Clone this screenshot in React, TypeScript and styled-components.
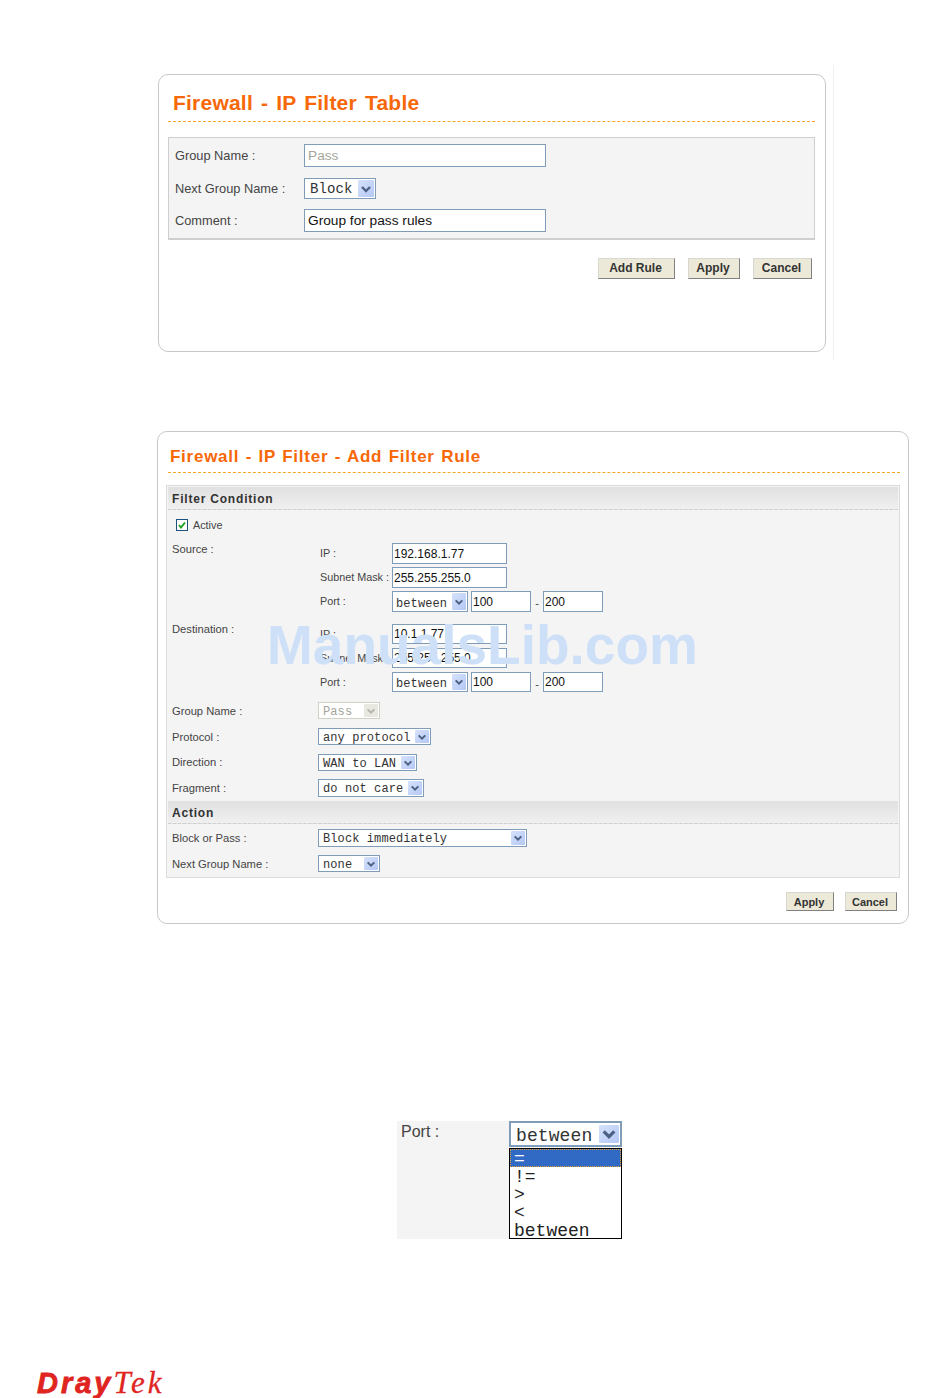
import React from "react";
import styled, { createGlobalStyle } from "styled-components";

const GlobalStyle = createGlobalStyle`
  html, body {
    margin: 0;
    padding: 0;
    background: #fff;
  }
  body {
    font-family: "Liberation Sans", Arial, sans-serif;
  }
`;

const Page = styled.div`
  position: relative;
  width: 950px;
  height: 1398px;
  overflow: hidden;
  display: flex;
  flex-direction: column;
  align-items: flex-start;
`;

const TableFrame = styled.div`
  margin: 65px 0 0 158px;
  padding: 9px 7px 8px 0;
  border-right: 1px solid #f0f0f0;
`;

const Panel = styled.section<{ $w: number; $h: number }>`
  box-sizing: border-box;
  width: ${(p) => p.$w}px;
  height: ${(p) => p.$h}px;
  background: #fff;
  border: 1px solid #c8c8c8;
  border-radius: 10px;
`;

const TableTitle = styled.h1`
  margin: 15px 10px 0 9px;
  padding: 0 0 8px 5px;
  height: 23px;
  line-height: 25px;
  font-size: 21px;
  font-weight: 700;
  letter-spacing: 0.22px;
  word-spacing: 2px;
  color: #f76808;
  border-bottom: 1px dashed #f5a623;
`;

const TableBox = styled.div`
  box-sizing: border-box;
  width: 647px;
  height: 103px;
  margin: 15px 0 0 9px;
  padding: 6px 0 0 6px;
  background: #f4f4f4;
  border: 1px solid #cfcfcf;
  border-bottom-width: 2px;
`;

const TableRow = styled.div<{ $h: number }>`
  height: ${(p) => p.$h}px;
  display: flex;
  align-items: flex-start;
`;

const TableLabel = styled.span<{ $top?: number }>`
  width: 129px;
  padding-top: ${(p) => p.$top ?? 4}px;
  font-size: 12.8px;
  line-height: 15px;
  color: #444;
`;

const TextField = styled.input<{
  $w: number;
  $h?: number;
  $size?: number;
  $pad?: number;
  $left?: number;
}>`
  box-sizing: border-box;
  display: block;
  width: ${(p) => p.$w}px;
  height: ${(p) => p.$h ?? 21}px;
  margin: 0 0 0 ${(p) => p.$left ?? 0}px;
  padding: 0 ${(p) => p.$pad ?? 1}px;
  background: #fff;
  border: 1px solid #7f9db9;
  border-radius: 0;
  outline: none;
  font-family: "Liberation Sans", Arial, sans-serif;
  font-size: ${(p) => p.$size ?? 12}px;
  color: #111;

  &:disabled {
    color: #a5a59a;
    -webkit-text-fill-color: #a5a59a;
    opacity: 1;
  }
`;

const SelectBox = styled.div<{
  $w: number;
  $h?: number;
  $size?: number;
  $off?: boolean;
  $pad?: number;
}>`
  box-sizing: border-box;
  width: ${(p) => p.$w}px;
  height: ${(p) => p.$h ?? 17}px;
  padding: 1px 1px 1px ${(p) => p.$pad ?? 4}px;
  display: flex;
  align-items: center;
  justify-content: space-between;
  background: #fff;
  border: 1px solid ${(p) => (p.$off ? "#d0d0c4" : "#7f9db9")};
  font-family: "Liberation Mono", "Courier New", monospace;
  font-size: ${(p) => p.$size ?? 12}px;
  letter-spacing: 0.1px;
  color: ${(p) => (p.$off ? "#a5a59a" : "#333")};
  white-space: pre;
`;

const SelectText = styled.span<{ $drop: number }>`
  padding-top: ${(p) => p.$drop}px;
`;

const ArrowTile = styled.span<{ $size: number; $off?: boolean }>`
  flex: none;
  width: ${(p) => p.$size}px;
  height: 100%;
  display: flex;
  align-items: center;
  justify-content: center;
  background: ${(p) =>
    p.$off ? "#e8e8e0" : "linear-gradient(135deg, #d6e2fb, #b4c8f5)"};
  border-radius: 1px;

  svg {
    display: block;
    width: ${(p) => p.$size - 4}px;
    height: ${(p) => p.$size - 4}px;
  }
`;

const Select = ({
  value,
  w,
  h,
  size,
  tile = 14,
  off,
  pad,
  drop = 2,
}: {
  value: string;
  w: number;
  h?: number;
  size?: number;
  tile?: number;
  off?: boolean;
  pad?: number;
  drop?: number;
}) => (
  <SelectBox $w={w} $h={h} $size={size} $off={off} $pad={pad}>
    <SelectText $drop={drop}>{value}</SelectText>
    <ArrowTile $size={tile} $off={off}>
      <svg viewBox="0 0 12 12" aria-hidden="true">
        <polyline
          points="2,4 6,8 10,4"
          fill="none"
          stroke={off ? "#b5b5ac" : "#4d6185"}
          strokeWidth="2.4"
        />
      </svg>
    </ArrowTile>
  </SelectBox>
);

const ButtonRow = styled.div<{ $gap: number; $top: number; $right: number }>`
  display: flex;
  justify-content: flex-end;
  gap: ${(p) => p.$gap}px;
  margin: ${(p) => p.$top}px ${(p) => p.$right}px 0 0;
`;

const PageButton = styled.button<{ $w: number; $h: number; $size: number; $lift: number }>`
  box-sizing: border-box;
  width: ${(p) => p.$w}px;
  height: ${(p) => p.$h}px;
  padding: 0 2px ${(p) => p.$lift}px 0;
  background: #ece9d8;
  border: 1px solid #d8d8d0;
  border-right-color: #808080;
  border-bottom-color: #808080;
  font-family: "Liberation Sans", Arial, sans-serif;
  font-size: ${(p) => p.$size}px;
  font-weight: 700;
  color: #333;
`;

const RulePanelWrap = styled.div`
  margin: 71px 0 0 157px;
`;

const RuleTitle = styled.h1`
  margin: 15px 8px 0 10px;
  padding: 0 0 7px 2px;
  height: 18px;
  line-height: 20px;
  font-size: 17px;
  font-weight: 700;
  letter-spacing: 0.74px;
  word-spacing: 1px;
  color: #f76808;
  border-bottom: 1px dashed #f5a623;
`;

const RuleBox = styled.div`
  box-sizing: border-box;
  width: 734px;
  height: 393px;
  margin: 12px 0 0 8px;
  padding: 1px;
  background: #f4f4f4;
  border: 1px solid #dcdcdc;
`;

const SectionHead = styled.h2`
  box-sizing: border-box;
  height: 23px;
  margin: 0;
  padding-left: 4px;
  line-height: 25px;
  font-size: 12px;
  font-weight: 700;
  letter-spacing: 0.8px;
  color: #333;
  background: linear-gradient(#e0e0e0, #f0f0f0);
  border-bottom: 1px dashed #cfcfcf;
`;

const ActiveRow = styled.label`
  box-sizing: border-box;
  height: 33px;
  padding: 0 0 4px 8px;
  display: flex;
  align-items: center;
  gap: 5px;
  font-size: 10.8px;
  color: #444;
`;

const CheckMark = styled.span`
  box-sizing: border-box;
  width: 12px;
  height: 12px;
  background: #fff;
  border: 1px solid #1c5180;

  svg {
    display: block;
    width: 10px;
    height: 10px;
  }
`;

const FieldGrid = styled.div<{ $top?: number }>`
  display: grid;
  grid-template-columns: 146px 1fr;
  margin-top: ${(p) => p.$top ?? 0}px;
  padding-left: 4px;
`;

const FieldLabel = styled.span<{ $shift?: number }>`
  margin-top: ${(p) => p.$shift ?? 2}px;
  font-size: 11.2px;
  line-height: 14px;
  color: #444;
`;

const SingleRow = styled(FieldGrid)<{ $h: number }>`
  height: ${(p) => p.$h}px;
  align-items: start;
`;

const AddressRows = styled.div<{ $gap: number }>`
  display: flex;
  flex-direction: column;
  gap: ${(p) => p.$gap}px;
`;

const AddressRow = styled.div`
  display: flex;
  align-items: flex-start;
`;

const SubLabel = styled.span`
  width: 72px;
  margin-left: 2px;
  padding-top: 3px;
  font-size: 10.8px;
  line-height: 14px;
  color: #444;
  white-space: nowrap;
`;

const Dash = styled.span`
  width: 12px;
  text-align: center;
  padding-top: 5px;
  font-size: 11px;
  line-height: 14px;
  color: #444;
`;

const Address = ({
  ip,
  mask,
  h,
}: {
  ip: string;
  mask: string;
  h: number;
}) => (
  <AddressRows $gap={24 - h}>
    <AddressRow>
      <SubLabel>IP :</SubLabel>
      <TextField $w={115} $h={h} readOnly value={ip} />
    </AddressRow>
    <AddressRow>
      <SubLabel>Subnet Mask :</SubLabel>
      <TextField $w={115} $h={h} readOnly value={mask} />
    </AddressRow>
    <AddressRow>
      <SubLabel>Port :</SubLabel>
      <Select value="between" w={76} h={h} pad={3} drop={4} />
      <TextField $w={60} $h={h} $left={3} readOnly value="100" />
      <Dash>-</Dash>
      <TextField $w={60} $h={h} readOnly value="200" />
    </AddressRow>
  </AddressRows>
);

const PortFigure = styled.div`
  margin: 197px 0 0 397px;
  width: 225px;
  height: 118px;
  display: flex;
  background: #f4f4f4;
`;

const PortLabel = styled.span`
  width: 112px;
  padding: 2px 0 0 4px;
  box-sizing: border-box;
  font-size: 16px;
  line-height: 18px;
  color: #444;
`;

const PortColumn = styled.div`
  width: 113px;
  display: flex;
  flex-direction: column;
  gap: 1px;
`;

const PortSelect = styled(SelectBox)`
  border-width: 2px;
  padding: 2px 1px 2px 5px;
`;

const PortList = styled.ul`
  box-sizing: border-box;
  height: 91px;
  margin: 0;
  padding: 0;
  list-style: none;
  background: #fff;
  border: 1px solid #000;
  font-family: "Liberation Mono", "Courier New", monospace;
  font-size: 18px;
  line-height: 20px;
  color: #222;
`;

const PortOption = styled.li<{ $active?: boolean }>`
  box-sizing: border-box;
  height: 18px;
  padding: 0 4px;
  background: ${(p) => (p.$active ? "#316ac5" : "transparent")};
  color: ${(p) => (p.$active ? "#fff" : "#222")};
  outline: ${(p) => (p.$active ? "1px dotted #e0a030" : "none")};
  outline-offset: -1px;
`;

const Logo = styled.div`
  margin: 130px 0 0 37px;
  height: 28px;
  display: flex;
  align-items: baseline;
  line-height: 28px;
  color: #e0241f;
  white-space: nowrap;
`;

const LogoBold = styled.span`
  font-family: "Liberation Sans", Arial, sans-serif;
  font-size: 29px;
  font-weight: 700;
  font-style: italic;
  letter-spacing: 3px;
  -webkit-text-stroke: 0.8px #e0241f;
`;

const LogoThin = styled.span`
  font-family: "Liberation Serif", "Times New Roman", serif;
  font-size: 31px;
  font-style: italic;
  letter-spacing: 3px;
  -webkit-text-stroke: 0.3px #e0241f;
`;

const Watermark = styled.div`
  position: absolute;
  left: 267px;
  top: 613px;
  font-size: 55px;
  line-height: 65px;
  font-weight: 700;
  color: #cde0f8;
  white-space: nowrap;
  pointer-events: none;
`;

export default function App() {
  return (
    <Page>
      <GlobalStyle />

      <TableFrame>
        <Panel $w={668} $h={278}>
          <TableTitle>Firewall - IP Filter Table</TableTitle>
          <TableBox>
            <TableRow $h={34}>
              <TableLabel>Group Name :</TableLabel>
              <TextField $w={242} $h={23} $size={13.7} $pad={3} disabled value="Pass" />
            </TableRow>
            <TableRow $h={31}>
              <TableLabel $top={3}>Next Group Name :</TableLabel>
              <Select value="Block" w={72} h={21} size={14} tile={16} pad={5} drop={0} />
            </TableRow>
            <TableRow $h={30}>
              <TableLabel>Comment :</TableLabel>
              <TextField $w={242} $h={23} $size={13.7} $pad={3} readOnly value="Group for pass rules" />
            </TableRow>
          </TableBox>
          <ButtonRow $gap={13} $top={18} $right={13}>
            <PageButton $w={77} $h={21} $size={12} $lift={2}>Add Rule</PageButton>
            <PageButton $w={52} $h={21} $size={12} $lift={2}>Apply</PageButton>
            <PageButton $w={59} $h={21} $size={12} $lift={2}>Cancel</PageButton>
          </ButtonRow>
        </Panel>
      </TableFrame>

      <RulePanelWrap>
        <Panel $w={752} $h={493}>
          <RuleTitle>Firewall - IP Filter - Add Filter Rule</RuleTitle>
          <RuleBox>
            <SectionHead>Filter Condition</SectionHead>
            <ActiveRow>
              <CheckMark>
                <svg viewBox="0 0 10 10" aria-hidden="true">
                  <polyline points="2,5 4,7.5 8,2.5" fill="none" stroke="#21a121" strokeWidth="2" />
                </svg>
              </CheckMark>
              Active
            </ActiveRow>
            <FieldGrid>
              <FieldLabel $shift={-1}>Source :</FieldLabel>
              <Address ip="192.168.1.77" mask="255.255.255.0" h={21} />
            </FieldGrid>
            <FieldGrid $top={12}>
              <FieldLabel $shift={-2}>Destination :</FieldLabel>
              <Address ip="10.1.1.77" mask="255.255.255.0" h={20} />
            </FieldGrid>
            <SingleRow $h={26} $top={10}>
              <FieldLabel>Group Name :</FieldLabel>
              <Select value="Pass" w={62} off />
            </SingleRow>
            <SingleRow $h={26}>
              <FieldLabel>Protocol :</FieldLabel>
              <Select value="any protocol" w={113} />
            </SingleRow>
            <SingleRow $h={25}>
              <FieldLabel $shift={1}>Direction :</FieldLabel>
              <Select value="WAN to LAN" w={99} />
            </SingleRow>
            <SingleRow $h={22}>
              <FieldLabel>Fragment :</FieldLabel>
              <Select value="do not care" w={106} h={18} />
            </SingleRow>
            <SectionHead>Action</SectionHead>
            <SingleRow $h={26} $top={5}>
              <FieldLabel>Block or Pass :</FieldLabel>
              <Select value="Block immediately" w={209} h={18} />
            </SingleRow>
            <SingleRow $h={20}>
              <FieldLabel>Next Group Name :</FieldLabel>
              <Select value="none" w={62} />
            </SingleRow>
          </RuleBox>
          <ButtonRow $gap={11} $top={14} $right={11}>
            <PageButton $w={48} $h={19} $size={11} $lift={0}>Apply</PageButton>
            <PageButton $w={52} $h={19} $size={11} $lift={0}>Cancel</PageButton>
          </ButtonRow>
        </Panel>
      </RulePanelWrap>

      <PortFigure>
        <PortLabel>Port :</PortLabel>
        <PortColumn>
          <PortSelect $w={113} $h={26} $size={18}>
            <SelectText $drop={3}>between</SelectText>
            <ArrowTile $size={20}>
              <svg viewBox="0 0 12 12" aria-hidden="true">
                <polyline points="2,4 6,8 10,4" fill="none" stroke="#4d6185" strokeWidth="2.4" />
              </svg>
            </ArrowTile>
          </PortSelect>
          <PortList>
            <PortOption $active>=</PortOption>
            <PortOption>!=</PortOption>
            <PortOption>&gt;</PortOption>
            <PortOption>&lt;</PortOption>
            <PortOption>between</PortOption>
          </PortList>
        </PortColumn>
      </PortFigure>

      <Logo>
        <LogoBold>Dray</LogoBold>
        <LogoThin>Tek</LogoThin>
      </Logo>

      <Watermark>ManualsLib.com</Watermark>
    </Page>
  );
}
